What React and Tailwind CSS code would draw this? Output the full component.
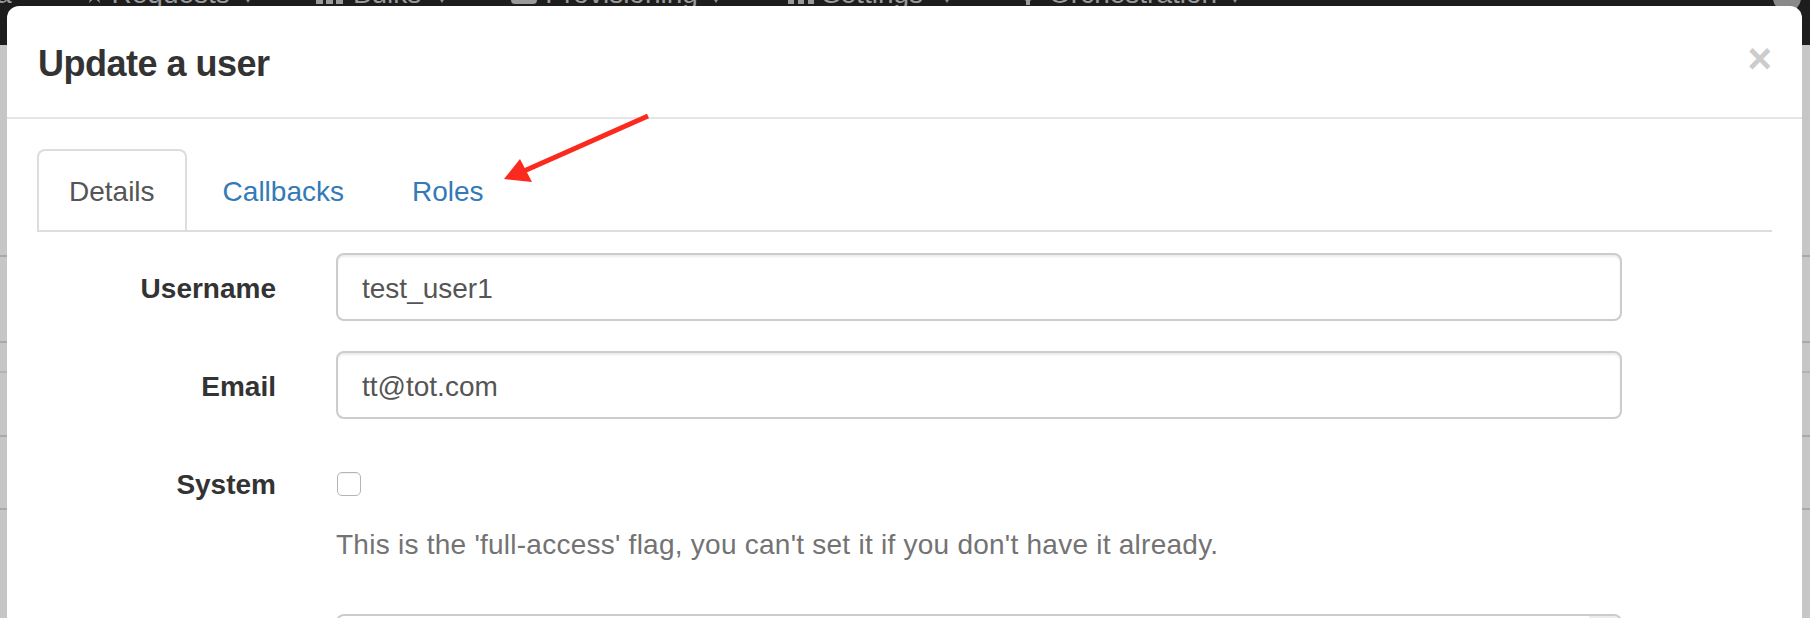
export default function App() {
  const Caret = ({ ml }) => (
    <span
      className={`${ml} mt-[10px] w-0 h-0 border-l-[5px] border-r-[5px] border-t-[8px] border-l-transparent border-r-transparent border-t-[#8f8f8f]`}
    />
  );

  return (
    <div className="relative w-[1810px] h-[618px] overflow-hidden bg-[#c6c6c6] font-['Liberation_Sans',Arial,sans-serif]">
      {/* page behind the modal */}
      <div className="h-[45px] bg-[#1d1d1d] overflow-hidden">
        <div className="-mt-[26px] h-[40px] flex items-center text-[28px] leading-[40px] text-[#9a9a9a] whitespace-nowrap">
          <span className="-ml-[4px]">a</span>
          <svg className="ml-[74px]" width="17" height="20" viewBox="0 0 17 20">
            <path d="M8.5 0 L11 7 L17 7 L12 11 L14 19 L8.5 14 L3 19 L5 11 L0 7 L6 7 Z" fill="#9a9a9a" />
          </svg>
          <span className="ml-[9px]">Requests</span>
          <Caret ml="ml-[13px]" />
          <svg className="ml-[63px]" width="28" height="20" viewBox="0 0 28 20">
            <rect x="0" y="0" width="7" height="6" fill="#9a9a9a" />
            <rect x="10" y="0" width="7" height="6" fill="#9a9a9a" />
            <rect x="20" y="0" width="7" height="6" fill="#9a9a9a" />
            <rect x="0" y="14" width="7" height="6" fill="#9a9a9a" />
            <rect x="10" y="14" width="7" height="6" fill="#9a9a9a" />
            <rect x="20" y="14" width="7" height="6" fill="#9a9a9a" />
          </svg>
          <span className="ml-[9px]">Bulks</span>
          <Caret ml="ml-[16px]" />
          <svg className="ml-[64px]" width="26" height="20" viewBox="0 0 26 20">
            <rect x="0" y="6" width="26" height="14" rx="4" fill="#9a9a9a" />
          </svg>
          <span className="ml-[8px]">Provisioning</span>
          <Caret ml="ml-[13px]" />
          <svg className="ml-[67px]" width="28" height="20" viewBox="0 0 28 20">
            <rect x="0" y="0" width="6" height="20" fill="#9a9a9a" />
            <rect x="10" y="4" width="6" height="16" fill="#9a9a9a" />
            <rect x="20" y="8" width="6" height="12" fill="#9a9a9a" />
          </svg>
          <span className="ml-[6px]">Settings</span>
          <Caret ml="ml-[19px]" />
          <svg className="ml-[65px]" width="22" height="22" viewBox="0 0 22 22">
            <circle cx="11" cy="11" r="7" fill="#9a9a9a" />
            <rect x="9" y="0" width="4" height="22" fill="#9a9a9a" />
            <rect x="0" y="9" width="22" height="4" fill="#9a9a9a" />
          </svg>
          <span className="ml-[10px]">Orchestration</span>
          <Caret ml="ml-[13px]" />
          <span className="ml-[533px] mt-[8px] w-[28px] h-[28px] rounded-full bg-[#8a8a8a]" />
        </div>
      </div>
      <div className="flex flex-col">
        <div className="h-[212px] border-b-2 border-[#a9a9a9]" />
        <div className="h-[86px] border-b-2 border-[#a9a9a9]" />
        <div className="h-[30px] border-b-2 border-[#b3b3b3]" />
        <div className="h-[64px] border-b-2 border-[#a9a9a9]" />
        <div className="h-[73px] border-b-2 border-[#a9a9a9]" />
      </div>

      {/* modal */}
      <div className="absolute left-[7px] top-[6px] w-[1795px] h-[640px] bg-white rounded-t-[12px]">
        <div className="flex items-start justify-between pl-[31px] pr-[30px] pt-[32px] pb-[28px] border-b-2 border-[#e5e5e5]">
          <h4 className="text-[36px] leading-[51px] font-bold tracking-[-0.5px] text-[#333]">
            Update a user
          </h4>
          <span className="text-[42px] leading-[42px] font-bold text-[#cccccc] mt-0">×</span>
        </div>

        <div className="px-[30px] pt-[30px]">
          <div className="flex border-b-2 border-[#dddddd] text-[28px] leading-[40px]">
            <div className="border-2 border-b-0 border-[#dddddd] rounded-t-[8px] px-[30px] pt-[21px] pb-[18px] text-[#555]">
              Details
            </div>
            <div className="ml-[4px] border-2 border-b-0 border-transparent px-[30px] pt-[21px] pb-[18px] text-[#337ab7]">
              Callbacks
            </div>
            <div className="ml-[4px] border-2 border-b-0 border-transparent px-[30px] pt-[21px] pb-[18px] text-[#337ab7]">
              Roles
            </div>
          </div>

          <div className="mt-[21px] flex flex-col text-[28px] leading-[40px]">
            <div className="flex mb-[30px]">
              <div className="w-[239px] text-right font-bold text-[#333] pt-[16px]">Username</div>
              <div className="ml-[60px] w-[1286px] h-[68px] flex items-center px-[24px] pt-[4px] border-2 border-[#cccccc] rounded-[8px] shadow-[inset_0_2px_2px_rgba(0,0,0,0.075)] text-[#555]">
                test_user1
              </div>
            </div>
            <div className="flex mb-[30px]">
              <div className="w-[239px] text-right font-bold text-[#333] pt-[16px]">Email</div>
              <div className="ml-[60px] w-[1286px] h-[68px] flex items-center px-[24px] pt-[4px] border-2 border-[#cccccc] rounded-[8px] shadow-[inset_0_2px_2px_rgba(0,0,0,0.075)] text-[#555]">
                tt@tot.com
              </div>
            </div>
            <div className="flex mb-[30px]">
              <div className="w-[239px] text-right font-bold text-[#333] pt-[16px]">System</div>
              <div className="ml-[61px] flex flex-col">
                <div className="mt-[23px] w-[24px] h-[24px] rounded-[5px] border-[1.5px] border-[#b5b5b5] bg-white shadow-[inset_0_1px_1px_rgba(0,0,0,0.06)]" />
                <div className="-ml-[1px] mt-[29px] mb-[19px] tracking-[0.25px] text-[#737373]">
                  This is the 'full-access' flag, you can't set it if you don't have it already.
                </div>
              </div>
            </div>
            <div className="flex">
              <div className="w-[239px]" />
              <div className="ml-[60px] w-[1286px] h-[68px] flex justify-end border-2 border-[#cccccc] rounded-[8px] overflow-hidden">
                <div className="w-[31px] h-full bg-[#ececec]" />
              </div>
            </div>
          </div>
        </div>
      </div>

      {/* annotation arrow */}
      <svg className="absolute left-0 top-0 pointer-events-none" width="1810" height="618" viewBox="0 0 1810 618">
        <line x1="648" y1="116" x2="524" y2="171" stroke="#fb2a1e" strokeWidth="5" />
        <polygon points="504,179 520,159 532,182" fill="#fb2a1e" />
      </svg>
    </div>
  );
}
